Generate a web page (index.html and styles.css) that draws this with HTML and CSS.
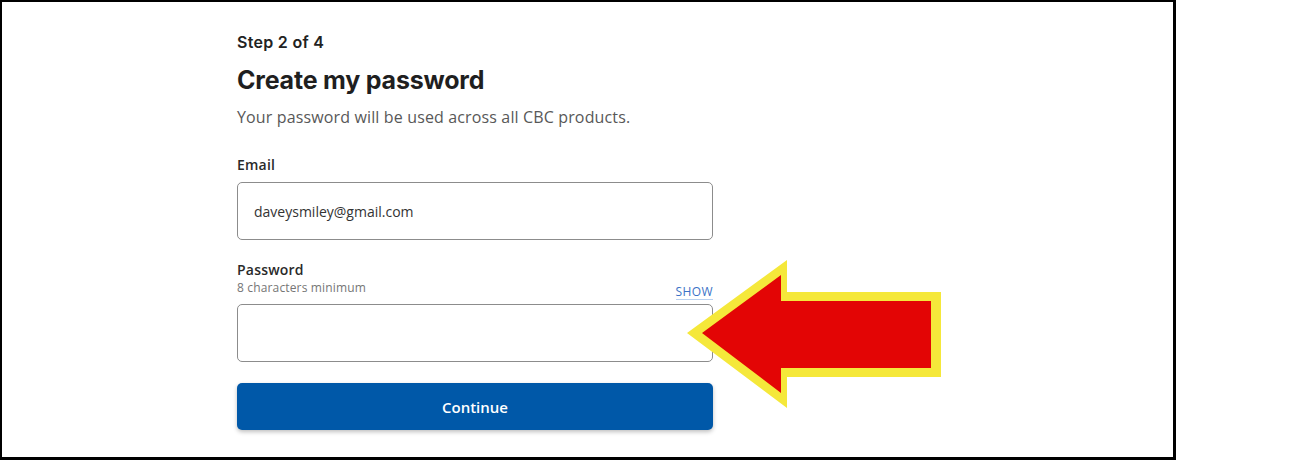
FILE: index.html
```html
<!DOCTYPE html>
<html lang="en">
<head>
  <meta charset="UTF-8">
  <meta name="viewport" content="width=device-width, initial-scale=1.0">
  <title>Create my password</title>
  <link rel="stylesheet" href="styles.css">
</head>
<body>

<div class="frame">
  <div class="form">
    <p class="step">Step 2 of 4</p>
    <h1>Create my password</h1>
    <p class="lead">Your password will be used across all CBC products.</p>

    <label class="field-label" for="email">Email</label>
    <input class="field" id="email" type="email" value="daveysmiley@gmail.com">

    <label class="field-label pw-label" for="password">Password</label>
    <div class="hint-row">
      <span class="hint">8 characters minimum</span>
      <a class="show" href="#">SHOW</a>
    </div>
    <input class="field" id="password" type="password">

    <button class="continue">Continue</button>
  </div>
</div>

<!-- стрелка-указатель поверх формы -->
<svg class="arrow" width="1300" height="460" viewBox="0 0 1300 460">
  <polygon points="687,333 787,260 787,292 941,292 941,377 787,377 787,408" fill="#f5e83a"/>
  <polygon points="702,333 781,275 781,301 931,301 931,368 781,368 781,393" fill="#e30505"/>
</svg>

</body>
</html>
```

FILE: styles.css
```css
body {
  margin: 0;
  position: relative;
  font-family: "Open Sans", "Liberation Sans", sans-serif;
  color: #222;
  background: #fff;
}
.frame {
  width: 1176px;
  height: 460px;
  box-sizing: border-box;
  border: 2px solid #000;
  border-right-width: 3px;
  border-bottom-width: 3px;
}
.form {
  width: 476px;
  margin-left: 235px;
  padding-top: 30px;
}
.step {
  margin: 0;
  font-family: Inter, "Open Sans", sans-serif;
  font-size: 16px;
  font-weight: 600;
  line-height: 20px;
  letter-spacing: 0.3px;
  color: #222;
}
h1 {
  margin: 12px 0 0;
  font-family: Inter, "Open Sans", sans-serif;
  font-size: 25px;
  font-weight: 700;
  line-height: 32px;
  letter-spacing: -0.2px;
  color: #1f1f1f;
}
.lead {
  margin: 10px 0 0;
  font-size: 16px;
  line-height: 22px;
  letter-spacing: 0.14px;
  color: #585858;
}
.field-label {
  display: block;
  margin-top: 27px;
  font-size: 14px;
  font-weight: 600;
  line-height: 20px;
  letter-spacing: 0.2px;
  color: #2a2a2a;
}
.pw-label {
  margin-top: 20px;
}
.field {
  display: block;
  width: 100%;
  height: 58px;
  box-sizing: border-box;
  margin-top: 7px;
  padding: 0 16px;
  border: 1px solid #8c8c8c;
  border-radius: 5px;
  font-family: "Open Sans", sans-serif;
  font-size: 14px;
  color: #333;
  background: #fff;
}
.hint-row {
  display: flex;
  justify-content: space-between;
  align-items: flex-end;
  height: 16px;
  margin-bottom: 8px;
}
.hint {
  font-size: 12px;
  line-height: 16px;
  letter-spacing: 0.15px;
  color: #767676;
}
.show {
  font-size: 12px;
  font-weight: 500;
  line-height: 14px;
  letter-spacing: 0.4px;
  color: #3b72c6;
  text-decoration: none;
  border-bottom: 1px solid #b9d1f0;
  margin-bottom: -4px;
}
#password {
  margin-top: 0;
}
.continue {
  display: block;
  width: 100%;
  height: 47px;
  margin-top: 21px;
  border: none;
  border-radius: 5px;
  background: #0058a8;
  color: #fff;
  font-family: "Open Sans", sans-serif;
  font-size: 15px;
  font-weight: 600;
  box-shadow: 0 2px 4px rgba(0, 0, 0, 0.25);
  cursor: pointer;
}
.arrow {
  position: absolute;
  top: 0;
  left: 0;
  pointer-events: none;
}
```
